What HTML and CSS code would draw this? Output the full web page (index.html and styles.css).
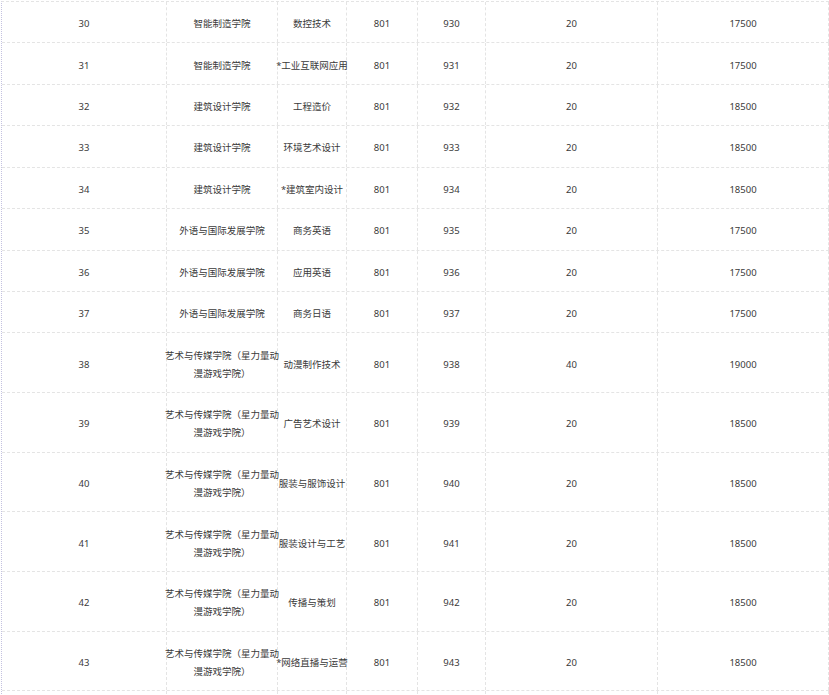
FILE: index.html
```html
<!DOCTYPE html>
<html lang="zh-CN">
<head>
<meta charset="utf-8">
<title>招生计划</title>
<link rel="stylesheet" href="styles.css">
</head>
<body>
<div class="sheet">
  <div class="row"><div class="cell">30</div><div class="cell">智能制造学院</div><div class="cell">数控技术</div><div class="cell">801</div><div class="cell">930</div><div class="cell">20</div><div class="cell">17500</div></div>
  <div class="row"><div class="cell">31</div><div class="cell">智能制造学院</div><div class="cell">*工业互联网应用</div><div class="cell">801</div><div class="cell">931</div><div class="cell">20</div><div class="cell">17500</div></div>
  <div class="row"><div class="cell">32</div><div class="cell">建筑设计学院</div><div class="cell">工程造价</div><div class="cell">801</div><div class="cell">932</div><div class="cell">20</div><div class="cell">18500</div></div>
  <div class="row"><div class="cell">33</div><div class="cell">建筑设计学院</div><div class="cell">环境艺术设计</div><div class="cell">801</div><div class="cell">933</div><div class="cell">20</div><div class="cell">18500</div></div>
  <div class="row"><div class="cell">34</div><div class="cell">建筑设计学院</div><div class="cell">*建筑室内设计</div><div class="cell">801</div><div class="cell">934</div><div class="cell">20</div><div class="cell">18500</div></div>
  <div class="row"><div class="cell">35</div><div class="cell">外语与国际发展学院</div><div class="cell">商务英语</div><div class="cell">801</div><div class="cell">935</div><div class="cell">20</div><div class="cell">17500</div></div>
  <div class="row"><div class="cell">36</div><div class="cell">外语与国际发展学院</div><div class="cell">应用英语</div><div class="cell">801</div><div class="cell">936</div><div class="cell">20</div><div class="cell">17500</div></div>
  <div class="row"><div class="cell">37</div><div class="cell">外语与国际发展学院</div><div class="cell">商务日语</div><div class="cell">801</div><div class="cell">937</div><div class="cell">20</div><div class="cell">17500</div></div>
  <div class="row tall"><div class="cell">38</div><div class="cell">艺术与传媒学院（星力量动<br>漫游戏学院）</div><div class="cell">动漫制作技术</div><div class="cell">801</div><div class="cell">938</div><div class="cell">40</div><div class="cell">19000</div></div>
  <div class="row tall"><div class="cell">39</div><div class="cell">艺术与传媒学院（星力量动<br>漫游戏学院）</div><div class="cell">广告艺术设计</div><div class="cell">801</div><div class="cell">939</div><div class="cell">20</div><div class="cell">18500</div></div>
  <div class="row tall"><div class="cell">40</div><div class="cell">艺术与传媒学院（星力量动<br>漫游戏学院）</div><div class="cell">服装与服饰设计</div><div class="cell">801</div><div class="cell">940</div><div class="cell">20</div><div class="cell">18500</div></div>
  <div class="row tall"><div class="cell">41</div><div class="cell">艺术与传媒学院（星力量动<br>漫游戏学院）</div><div class="cell">服装设计与工艺</div><div class="cell">801</div><div class="cell">941</div><div class="cell">20</div><div class="cell">18500</div></div>
  <div class="row tall"><div class="cell">42</div><div class="cell">艺术与传媒学院（星力量动<br>漫游戏学院）</div><div class="cell">传播与策划</div><div class="cell">801</div><div class="cell">942</div><div class="cell">20</div><div class="cell">18500</div></div>
  <div class="row tall"><div class="cell">43</div><div class="cell">艺术与传媒学院（星力量动<br>漫游戏学院）</div><div class="cell">*网络直播与运营</div><div class="cell">801</div><div class="cell">943</div><div class="cell">20</div><div class="cell">18500</div></div>
  <div class="row tail"><div class="cell"></div><div class="cell"></div><div class="cell"></div><div class="cell"></div><div class="cell"></div><div class="cell"></div><div class="cell"></div></div>
</div>
</body>
</html>
```

FILE: styles.css
```css
html, body {
  margin: 0;
  padding: 0;
  background: #ffffff;
  height: 695px;
  overflow: hidden;
}

body {
  font-family: "Noto Sans", "Noto Sans CJK SC", sans-serif;
  font-size: 9.5px;
  color: #3a3a3a;
}

.sheet {
  margin: 1px 0 0 1px;
  border-left: 1px dotted #c4c2e0;
  border-top: 1px dashed #e4e4e4;
  width: 827px;
}

.row {
  display: grid;
  grid-template-columns: 165px 111px 69px 71px 68px 172px 171px;
  height: 41.43px;
  box-sizing: border-box;
  border-bottom: 1px dashed #e4e4e4;
}

.row.tall {
  height: 59.67px;
}

.row.tail {
  height: 3px;
  border-bottom: none;
}

.cell {
  display: flex;
  align-items: center;
  justify-content: center;
  text-align: center;
  white-space: nowrap;
  line-height: 18px;
  border-right: 1px dashed #e4e4e4;
  padding-top: 4px;
  box-sizing: border-box;
  min-width: 0;
}

.tail .cell {
  padding-top: 0;
}
```
